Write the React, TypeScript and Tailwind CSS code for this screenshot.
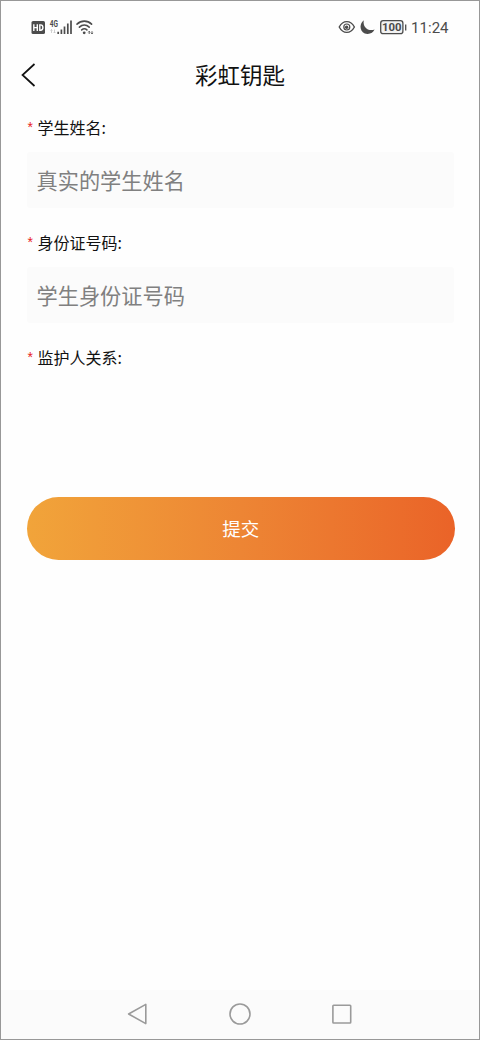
import React from "react";

function StatusBar() {
  return (
    <header className="flex h-[52px] shrink-0 items-center justify-between pl-[29px] pr-[30px]">
      <svg width="66" height="20" viewBox="30 17 66 20" aria-hidden="true">
        <rect x="31.5" y="21" width="13.5" height="13" rx="1.6" fill="#4c4c4c" />
        <g stroke="#fff" strokeWidth="1.4" fill="none">
          <path d="M33.8 24.2v6.8M37.3 24.2v6.8M34 27.6h3.4M39.8 24.9v5.4h.8c1.5 0 2.3-.9 2.3-2.7s-.8-2.7-2.3-2.7z" />
        </g>
        <text x="49.8" y="26.6" fontSize="8.5" fontWeight="700" textLength="8.2" lengthAdjust="spacingAndGlyphs" fill="#4c4c4c" className="font-[Roboto,sans-serif]">4G</text>
        <g stroke="#c4c4c4" strokeWidth="0.8" fill="none">
          <path d="M51.5 29.5v3.5M50.5 30.5l1-1 1 1M54.5 29.5v3.5M53.5 32l1 1 1-1" />
        </g>
        <g stroke="#4c4c4c" strokeWidth="1.7">
          <path d="M58.2 31.8V34M61.4 29.5V34M64.5 26.5V34M67.8 23.6V34M71 20.6V34" />
        </g>
        <g fill="none" stroke="#4c4c4c" strokeWidth="1.6" strokeLinecap="round">
          <path d="M77 24.1c4.2-4 10.4-4 14.6 0M79.4 27.1c2.9-2.7 6.9-2.7 9.8 0M81.7 29.9c1.7-1.4 3.7-1.4 5.2 0" />
        </g>
        <circle cx="84.2" cy="32.8" r="1.4" fill="#4c4c4c" />
        <path d="M89.2 34v-2.6M88.2 32.3l1-1 1 1M92 31.2v2.6M91 32.9l1 1 1-1" fill="none" stroke="#4c4c4c" strokeWidth="0.9" />
      </svg>

      <div className="flex items-center">
        <svg width="69" height="20" viewBox="338 17 69 20" aria-hidden="true">
          <path d="M339.2 27c3.8-7.2 11.4-7.2 15.2 0-3.8 7.2-11.4 7.2-15.2 0z" fill="none" stroke="#4c4c4c" strokeWidth="1.4" strokeLinejoin="round" />
          <circle cx="346.8" cy="27" r="3" fill="none" stroke="#4c4c4c" strokeWidth="1.2" />
          <circle cx="346.6" cy="27.2" r="1.7" fill="#4c4c4c" />
          <path d="M363.8 20.2c-5.4 3.7-4 13.4 3.6 13.7 3.4.1 6-1.7 7.2-4.4-6.3 2.3-12.2-2.4-10.8-9.3z" fill="#4c4c4c" />
          <rect x="380.7" y="20.7" width="22.2" height="13" rx="2.5" fill="#f2f2f2" stroke="#4c4c4c" strokeWidth="1.3" />
          <text x="382" y="31.4" fontSize="11.8" fontWeight="700" textLength="19.6" lengthAdjust="spacingAndGlyphs" fill="#4c4c4c" className="font-[Roboto,sans-serif]">100</text>
          <path d="M405.7 24.4v6" stroke="#4c4c4c" strokeWidth="1.3" />
        </svg>
        <span className="ml-[4px] mt-[2px] w-[38px] whitespace-nowrap font-[Roboto,sans-serif] text-[15px] leading-5 tracking-[0.05px] text-[#4c4c4c]">11:24</span>
      </div>
    </header>
  );
}

function FieldLabel({ children }: { children: React.ReactNode }) {
  return (
    <span className="flex h-6 items-center text-[16px] leading-6 text-[#111]">
      <span className="w-[11px] shrink-0 pb-[2px] pl-px font-['Liberation_Sans',sans-serif] text-[14px] leading-6 text-[#e8211c]">*</span>
      <span className="pb-[2px]">{children}</span>
    </span>
  );
}

function TextField({ label, placeholder }: { label: string; placeholder: string }) {
  return (
    <label className="flex h-[115px] flex-col gap-3">
      <FieldLabel>{label}</FieldLabel>
      <input
        type="text"
        placeholder={placeholder}
        className="h-14 w-[427px] rounded-[3px] bg-[#fbfbfb] pb-[2px] pl-[10px] text-[21.2px] text-[#222] outline-none placeholder:text-[#808080]"
      />
    </label>
  );
}

function NavigationBar() {
  return (
    <nav className="flex h-[49px] shrink-0 items-center justify-center gap-[78px] bg-[#fbfbfb] pb-[2px]">
      <button type="button" aria-label="返回">
        <svg className="block" width="24" height="24" viewBox="0 0 24 24" fill="none" stroke="#9a9a9a" strokeWidth="1.6" strokeLinejoin="round">
          <path d="M2.6 12 19.8 2.4v19.2z" />
        </svg>
      </button>
      <button type="button" aria-label="主页">
        <svg className="block" width="24" height="24" viewBox="0 0 24 24" fill="none" stroke="#9a9a9a" strokeWidth="1.6">
          <circle cx="12" cy="12" r="10" />
        </svg>
      </button>
      <button type="button" aria-label="最近任务">
        <svg className="block" width="24" height="24" viewBox="0 0 24 24" fill="none" stroke="#9a9a9a" strokeWidth="1.6" strokeLinejoin="round">
          <rect x="2.9" y="3.2" width="17.8" height="17.8" rx="0.7" />
        </svg>
      </button>
    </nav>
  );
}

export default function App() {
  return (
    <div className="flex h-[1040px] w-[480px] flex-col border border-[#989898] bg-[#fefefe] font-['Noto_Sans_CJK_SC',sans-serif]">
      <StatusBar />
      <div className="grid h-[44px] shrink-0 grid-cols-[60px_1fr_60px] items-center">
        <button type="button" aria-label="返回" className="pl-5">
          <svg className="block" width="16" height="26" viewBox="0 0 16 26" fill="none" stroke="#111" strokeWidth="1.7">
            <path d="M13.5 2 1.5 13l12 11" />
          </svg>
        </button>
        <h1 className="pb-[2px] text-center text-[22.5px] leading-8 text-[#111]">彩虹钥匙</h1>
      </div>
      <form className="flex flex-1 flex-col pl-[25.5px] pr-6 pt-[19px]" onSubmit={(e) => e.preventDefault()}>
        <TextField label="学生姓名:" placeholder="真实的学生姓名" />
        <TextField label="身份证号码:" placeholder="学生身份证号码" />
        <FieldLabel>监护人关系:</FieldLabel>
        <button
          type="submit"
          className="mt-[127px] h-[63px] w-[428.5px] rounded-full bg-linear-to-r from-[#f1a43a] via-[#ed8534] to-[#ea6328] pt-px text-[18.5px] text-white"
        >
          提交
        </button>
      </form>
      <NavigationBar />
    </div>
  );
}
